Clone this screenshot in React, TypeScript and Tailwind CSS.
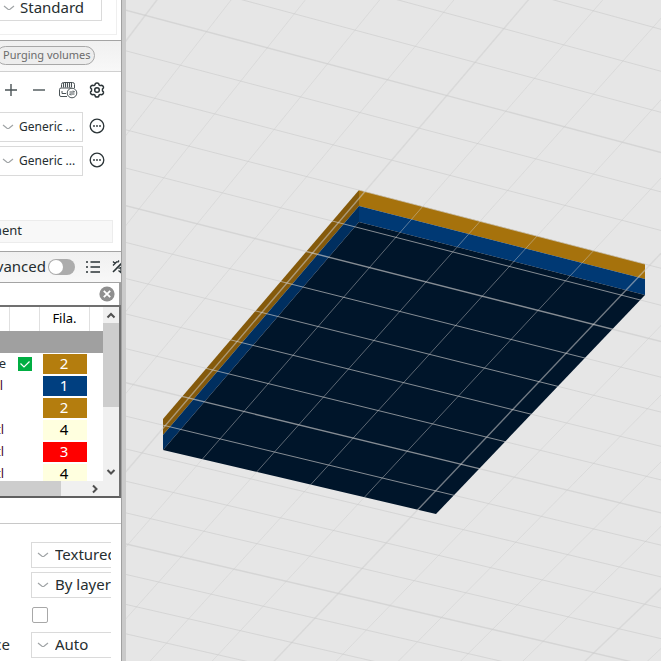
import React, { useState } from "react";
import clsx from "clsx";

type Point = [number, number];

interface ObjectRow {
  name: string;
  nameClass: string;
  printable?: boolean;
  filament: number;
  color: string;
}

const objectRows: ObjectRow[] = [
  { name: "e", nameClass: "w-1.5 text-[#262e30]", printable: true, filament: 2, color: "bg-[#b47d0e] text-white" },
  { name: "l", nameClass: "w-[3px] text-[#4b0a33]", filament: 1, color: "bg-[#003f80] text-white" },
  { name: "", nameClass: "", filament: 2, color: "bg-[#b47d0e] text-white" },
  { name: "tl", nameClass: "w-1 text-[#4b0a33]", filament: 4, color: "bg-[#ffffdf] text-black" },
  { name: "tl", nameClass: "w-1 text-[#4b0a33]", filament: 3, color: "bg-[#ff0000] text-white" },
  { name: "tl", nameClass: "w-1 text-[#4b0a33]", filament: 4, color: "bg-[#ffffdf] text-black" },
];

// Camera projection of the bed plane (grid units -> screen)
function project(u: number, v: number): Point {
  const w = 1 + 0.0038 * u + 0.0088 * v;
  return [(62 * u - 24.63 * v + 145.3) / w, (16.41 * u + 34.33 * v + 15.3) / w];
}

const gridIndexes = Array.from({ length: 36 }, (_, i) => i - 10);

function GridLine({ from, to, major, row }: { from: Point; to: Point; major: boolean; row: boolean }) {
  return (
    <line
      x1={from[0]}
      y1={from[1]}
      x2={to[0]}
      y2={to[1]}
      stroke="#cdcdcd"
      strokeWidth={major ? 1.4 : 1}
      strokeOpacity={row ? 0.65 : major ? 0.55 : 0.45}
    />
  );
}

function Viewport() {
  return (
    <main className="relative min-w-0 flex-1 overflow-hidden bg-[#e6e6e6]">
      <svg className="absolute inset-0 h-full w-full" role="img" aria-label="Plate view">
        <g transform="translate(-126 0)">
          {/* Left wall */}
          <polygon points="359,190 163,419 163,435 359,206" fill="#855a0b" />
          <polygon points="359,206 163,435 163,450 359,222" fill="#002f60" />
          {/* Back wall */}
          <polygon points="359,190 645,264 645,279 359,206" fill="#a6720c" />
          <polygon points="359,206 645,279 645,295 359,222" fill="#003974" />
          {/* Bottom */}
          <polygon points="359,222 645,295 436,514 163,450" fill="#00152a" />
          {gridIndexes.map((i) => (
            <React.Fragment key={i}>
              <GridLine from={project(-10, i)} to={project(25, i)} major={i % 5 === 0} row />
              <GridLine from={project(i, -10)} to={project(i, 25)} major={i % 5 === 0} row={false} />
            </React.Fragment>
          ))}
        </g>
      </svg>
    </main>
  );
}

function Chevron({ className }: { className?: string }) {
  return (
    <svg viewBox="0 0 12 6" className={clsx("pointer-events-none h-1.5 w-3", className)} fill="none" stroke="#a0a4a6" strokeWidth="1.2">
      <path d="M1 1 L5 4.2 Q6 4.8 7 4.2 L11 1" />
    </svg>
  );
}

function Combo({ label, value, className, textClass }: { label: string; value: string; className?: string; textClass: string }) {
  return (
    <div className={clsx("relative flex shrink-0 items-center border border-[#dadada] bg-white", className)}>
      <select aria-label={label} className={clsx("h-full w-full appearance-none outline-none", textClass)}>
        <option>{value}</option>
      </select>
    </div>
  );
}

function MoreButton() {
  return (
    <button type="button" aria-label="Edit filament" className="mb-0.5 h-4 w-4">
      <svg viewBox="0 0 16 16" className="h-4 w-4">
        <circle cx="8" cy="8" r="6.8" fill="none" stroke="#2b3437" strokeWidth="1.3" />
        <g fill="#2b3437">
          <circle cx="5" cy="8" r="0.9" />
          <circle cx="8" cy="8" r="0.9" />
          <circle cx="11" cy="8" r="0.9" />
        </g>
      </svg>
    </button>
  );
}

function FilamentToolbar() {
  return (
    <div className="flex h-9 items-center pl-1">
      <button type="button" aria-label="Add filament" className="mr-3.5 h-3.5 w-3.5">
        <svg viewBox="0 0 14 14" className="h-3.5 w-3.5" stroke="#4a5356" strokeWidth="1.4">
          <path d="M7 1v12M1 7h12" />
        </svg>
      </button>
      <button type="button" aria-label="Remove filament" className="mr-3 h-3.5 w-3.5">
        <svg viewBox="0 0 14 14" className="h-3.5 w-3.5" stroke="#4a5356" strokeWidth="1.4">
          <path d="M1 7h12" />
        </svg>
      </button>
      <button type="button" aria-label="Sync filaments" className="mr-2.5 h-5 w-5">
        <svg viewBox="0 0 20 20" className="h-5 w-5" fill="none" stroke="#4a5356" strokeWidth="1">
          <path d="M3.5 7.5V4.5Q3.5 2.5 5.5 2.5h9Q16.5 2.5 16.5 4.5V8" />
          <path d="M5.5 3v4.5M7.5 3v4.5M9.5 3v4.5M11.5 3v4.5M13.5 3v4.5" strokeWidth="1.1" />
          <path d="M9 16.5H3Q1.5 16.5 1.5 15V9.5Q1.5 8 3 8H13" />
          <path d="M4 11v2.5h4" />
          <circle cx="14" cy="13" r="4.8" fill="#fff" />
          <path d="M11.5 12h5l-1.4-1.4M16.5 14h-5l1.4 1.4" />
        </svg>
      </button>
      <button type="button" aria-label="Filament settings" className="h-[18px] w-[18px]">
        <svg viewBox="0 0 18 18" className="h-[18px] w-[18px]" fill="none" stroke="#2b3437" strokeWidth="1.5" strokeLinejoin="round">
          <path d="M7 3.8Q7 2 9 2T11 3.8L11.5 4.2Q12.6 4.6 13.7 4.3Q15 4.6 15.5 6Q15.8 7.2 14.5 8V10Q15.8 10.8 15.5 12Q15 13.4 13.7 13.7Q12.6 13.4 11.5 13.8L11 14.2Q11 16 9 16T7 14.2L6.5 13.8Q5.4 13.4 4.3 13.7Q3 13.4 2.5 12Q2.2 10.8 3.5 10V8Q2.2 7.2 2.5 6Q3 4.6 4.3 4.3Q5.4 4.6 6.5 4.2Z" />
          <circle cx="9" cy="9" r="2.3" />
        </svg>
      </button>
    </div>
  );
}

function ObjectTable() {
  return (
    <section className="border-y-2 border-r-2 border-t-[#707070] border-r-[#707070] border-b-[#606060]">
      <div className="flex h-[174px]">
        <div className="min-w-0 flex-1 overflow-hidden">
          <table className="w-full table-fixed border-separate border-spacing-0 text-[13px] leading-[18px] text-black">
            <colgroup>
              <col className="w-2.5" />
              <col className="w-[30px]" />
              <col className="w-[50px]" />
              <col />
            </colgroup>
            <thead>
              <tr className="h-6">
                <th className="border-r border-[#e0e0e0] p-0" />
                <th className="border-r border-[#e0e0e0] p-0" />
                <th className="border-r border-[#e0e0e0] p-0 pb-0.5 font-normal">Fila.</th>
                <th className="p-0" />
              </tr>
            </thead>
            <tbody>
              <tr className="h-[22px] bg-[#a0a0a0]">
                <td colSpan={4} className="p-0" />
              </tr>
              {objectRows.map((row, i) => (
                <tr key={i} className="h-[22px]">
                  <td className="p-0 pb-0.5">
                    <div className={clsx("flex justify-end", row.nameClass)}>{row.name}</div>
                  </td>
                  <td className="p-0">
                    {row.printable && (
                      <label className="relative mx-auto flex h-3.5 w-3.5 items-center justify-center bg-[#00ae42]">
                        <input type="checkbox" defaultChecked aria-label="Printable" className="absolute inset-0 appearance-none" />
                        <svg viewBox="0 0 14 14" className="pointer-events-none relative h-3.5 w-3.5" fill="none" stroke="#fff" strokeWidth="1.2">
                          <path d="M2.5 6.5l3.5 3.5l5.5-5.5" />
                        </svg>
                      </label>
                    )}
                  </td>
                  <td className="px-[3px] py-0">
                    <div className={clsx("h-5 pr-0.5 text-center text-[15px] leading-[18px]", row.color)}>{row.filament}</div>
                  </td>
                  <td className="p-0" />
                </tr>
              ))}
            </tbody>
          </table>
        </div>
        {/* Vertical scrollbar */}
        <div className="flex w-4 shrink-0 flex-col items-center bg-[#f0f0f0]">
          <svg viewBox="0 0 16 16" className="h-4 w-4" fill="none" stroke="#505050" strokeWidth="2">
            <path d="M4.5 10.5L8 7l3.5 3.5" />
          </svg>
          <div className="h-[84px] w-full bg-[#cdcdcd]" />
          <svg viewBox="0 0 16 16" className="mt-auto h-4 w-4" fill="none" stroke="#505050" strokeWidth="2">
            <path d="M4.5 5L8 8.5l3.5-3.5" />
          </svg>
        </div>
      </div>
      {/* Horizontal scrollbar */}
      <div className="flex h-[15px] items-center bg-[#f0f0f0]">
        <div className="h-full w-[61px] bg-[#cdcdcd]" />
        <svg viewBox="0 0 16 16" className="ml-auto mr-4 h-4 w-4" fill="none" stroke="#505050" strokeWidth="2">
          <path d="M6 4.5L9.5 8L6 11.5" />
        </svg>
      </div>
    </section>
  );
}

function PlateSettings() {
  return (
    <section className="overflow-hidden pr-2.5 pt-[18px] text-[15px]">
      <div className="flex flex-col gap-1 overflow-hidden pl-[31px]">
        <div className="relative">
          <Combo label="Bed type" value="Textured" className="h-[26px] w-24" textClass="pb-0.5 pl-[23px]" />
          <Chevron className="absolute left-1.5 top-2.5" />
        </div>
        <div className="relative">
          <Combo label="Print sequence" value="By layer" className="h-[26px] w-24" textClass="pb-0.5 pl-[23px]" />
          <Chevron className="absolute left-1.5 top-2.5" />
        </div>
        <div className="flex h-[26px] items-center">
          <input type="checkbox" aria-label="Spiral vase" className="ml-px h-4 w-4 appearance-none rounded-xs border border-[#a8a8a8] bg-white" />
        </div>
      </div>
      <div className="mt-1 flex overflow-hidden">
        <span className="flex w-[31px] shrink-0 items-center pb-0.5">
          <span className="flex w-2.5 justify-end">ce</span>
        </span>
        <div className="relative">
          <Combo label="First layer sequence" value="Auto" className="h-[26px] w-24" textClass="pb-0.5 pl-[23px]" />
          <Chevron className="absolute left-1.5 top-2.5" />
        </div>
      </div>
    </section>
  );
}

export default function App() {
  const [advanced, setAdvanced] = useState(false);

  return (
    <div className="flex h-screen overflow-hidden bg-white font-['Noto_Sans','Liberation_Sans',sans-serif] text-[#262e30]">
      <aside className="flex w-[126px] shrink-0 flex-col overflow-hidden border-r-4 border-[#cacaca]">
        <div className="flex-1 border-r border-[#a0a0a0]">
          {/* Printer */}
          <div className="h-10 pr-1">
            <div className="h-[35px] border-b border-r border-[#efefef]">
              <div className="relative mr-3.5 h-[21px]">
                <div className="flex h-full border-b border-r border-[#dadada]">
                  <select aria-label="Nozzle type" className="-mt-1 w-full appearance-none pb-0.5 pl-5 text-[15px] outline-none">
                    <option>Standard</option>
                  </select>
                </div>
                <Chevron className="absolute left-[3px] top-[5px]" />
              </div>
            </div>
          </div>

          {/* Filament */}
          <div className="flex h-8 items-center border-b border-t border-b-[#d0d0d0] border-t-[#a4a4a4] bg-linear-to-b from-[#f0f0f0] to-[#f8f8f8]">
            <button type="button" className="-ml-1 mb-0.5 h-[19px] rounded-full border border-[#a8a8a8] bg-[#ededed] pl-1.5 pr-[3px] text-[11px] leading-4 text-[#6b6b6b]">
              Purging volumes
            </button>
          </div>
          <FilamentToolbar />
          <div className="mt-1 flex flex-col gap-1">
            {[1, 2].map((n) => (
              <div key={n} className="relative flex items-center">
                <Combo label={`Filament ${n}`} value="Generic ..." className="-ml-px mr-1.5 h-[30px] w-[84px]" textClass="pl-[19px] text-[12px]" />
                <Chevron className="absolute left-0.5 top-3" />
                <MoreButton />
              </div>
            ))}
          </div>
          <div className="mr-2 mt-11 flex h-[23px] items-center border border-l-0 border-[#ececec] bg-[#f8f8f8] pb-0.5 text-[13px]">
            <span className="flex w-[22px] justify-end">ment</span>
          </div>

          {/* Process */}
          <div className="mt-2 flex h-8 items-center overflow-hidden border-y border-y-[#a4a4a4] bg-linear-to-b from-[#f0f0f0] to-[#f8f8f8]">
            <span className="flex w-[46px] shrink-0 justify-end pb-0.5 text-[15px]" id="advanced-label">Advanced</span>
            <button
              type="button"
              role="switch"
              aria-checked={advanced}
              aria-labelledby="advanced-label"
              onClick={() => setAdvanced(!advanced)}
              className={clsx("ml-0.5 flex h-4 w-[27px] shrink-0 items-center rounded-full p-px", advanced ? "justify-end bg-[#00ae42]" : "bg-[#acacac]")}
            >
              <span className="h-3.5 w-3.5 rounded-full bg-white" />
            </button>
            <button type="button" aria-label="Parameter list" className="ml-2.5 h-4 w-4 shrink-0">
              <svg viewBox="0 0 16 16" className="h-4 w-4" stroke="#2b3437" strokeWidth="1.5">
                <path d="M1 3h2M5.5 3H15M1 8h2M5.5 8H15M1 13h2M5.5 13H15" />
              </svg>
            </button>
            <button type="button" aria-label="Compare presets" className="ml-2.5 h-4 w-4 shrink-0">
              <svg viewBox="0 0 16 16" className="h-4 w-4" fill="none" stroke="#2b3437" strokeWidth="1.3">
                <path d="M2 13L13 2" strokeWidth="1.6" />
                <path d="M2 2.5l2 2l2-2M2 6.5l2-2M8 1.5l-1.5 2" />
                <path d="M7.500 9.500l2.500 -1l3 2M7.500 11.500l3 2.500l3-1M10 9v4" />
              </svg>
            </button>
          </div>
          <div className="flex h-[22px] items-center border-r-2 border-[#a0a0a0]">
            <input type="text" aria-label="Search" className="h-full w-full min-w-0 flex-1 outline-none" />
            <button type="button" aria-label="Clear search" className="mr-1 h-4 w-4 shrink-0">
              <svg viewBox="0 0 16 16" className="h-4 w-4">
                <circle cx="8" cy="8" r="7.6" fill="#8f8f8f" />
                <path d="M4.8 4.8l6.4 6.4M11.2 4.8l-6.4 6.4" stroke="#fff" strokeWidth="1.8" />
              </svg>
            </button>
          </div>
          <ObjectTable />
          <div className="mt-[25px] border-b border-[#c8c8c8]" />
          <PlateSettings />
        </div>
      </aside>
      <Viewport />
    </div>
  );
}
